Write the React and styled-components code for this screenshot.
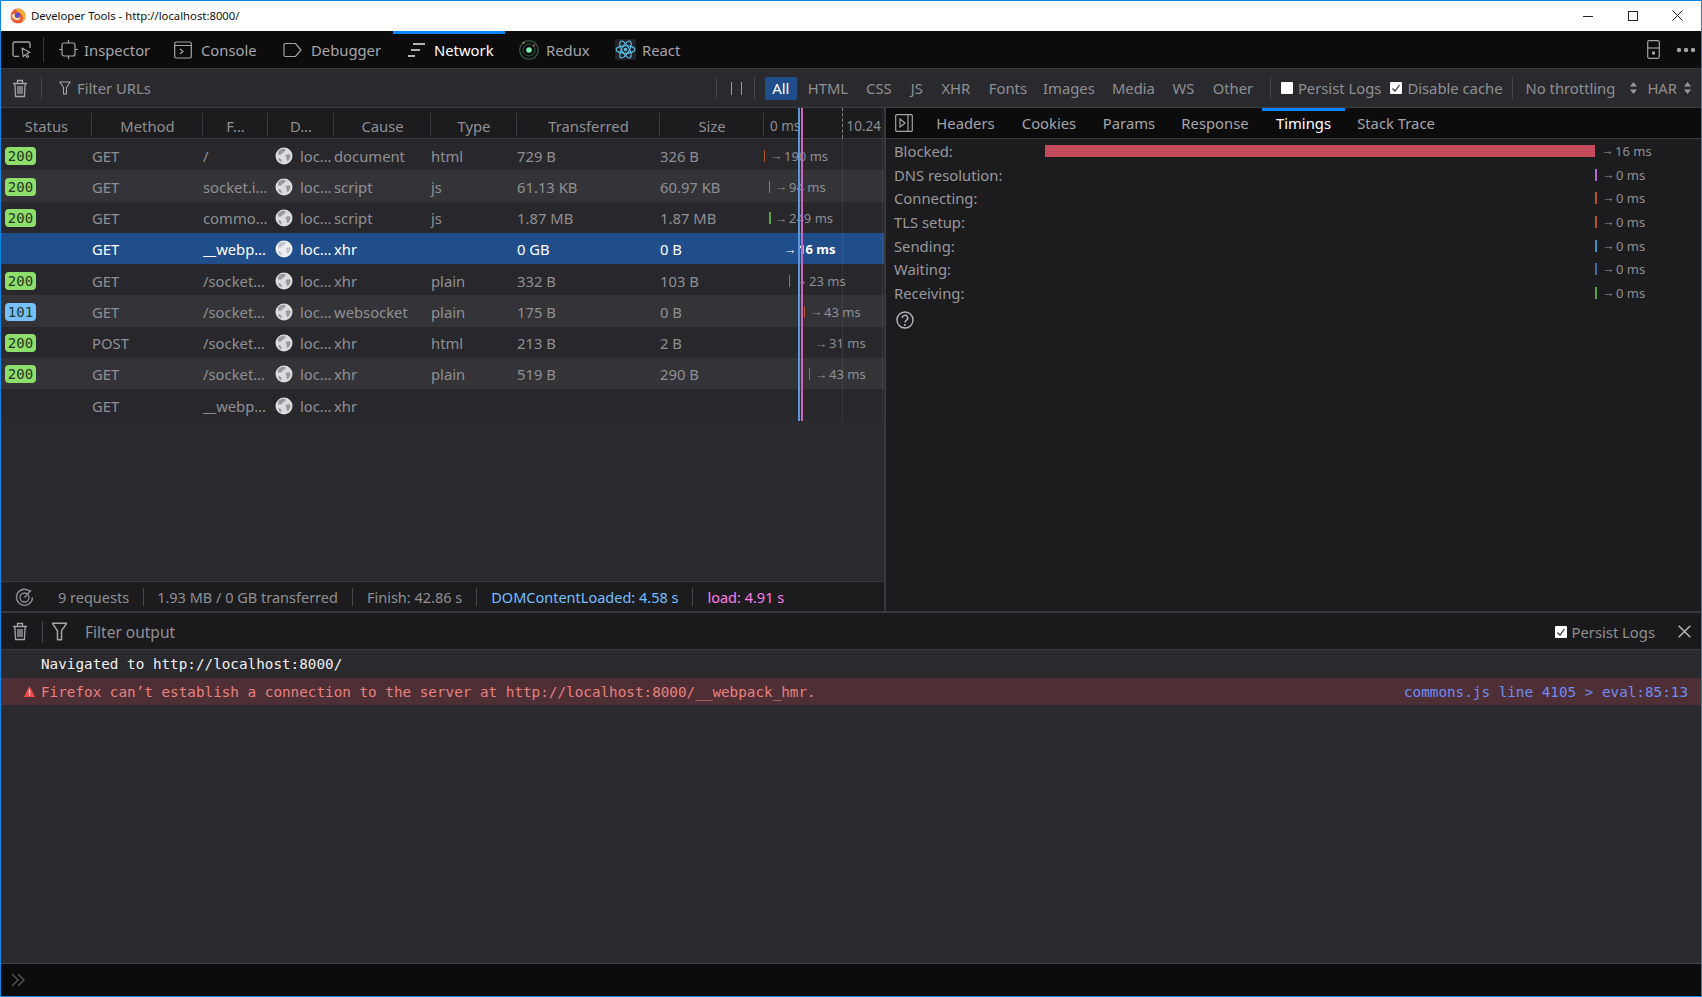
import React from "react";
import styled, { createGlobalStyle } from "styled-components";

const GlobalStyle = createGlobalStyle`
  * { box-sizing: border-box; }
  html, body { margin: 0; padding: 0; background: #2a2a2e; }
  body { font-family: "Noto Sans", "Open Sans", sans-serif; font-size: 14.5px; color: #8f8f93; }
`;

const MONO = `"DejaVu Sans Mono", "Liberation Mono", monospace`;

// data
const mainTabs = [
  { name: "Inspector", w: 115, icon: "inspector", gap: 6 },
  { name: "Console", w: 109, icon: "console" },
  { name: "Debugger", w: 125, icon: "debugger" },
  { name: "Network", w: 112, icon: "network", active: true },
  { name: "Redux", w: 95, icon: "redux", pad: 14, gap: 7 },
  { name: "React", w: 80, icon: "react", gap: 6 },
];

const filters = [
  { name: "HTML", w: 60 },
  { name: "CSS", w: 42 },
  { name: "JS", w: 34 },
  { name: "XHR", w: 44 },
  { name: "Fonts", w: 60 },
  { name: "Images", w: 62 },
  { name: "Media", w: 67 },
  { name: "WS", w: 33 },
  { name: "Other", w: 66 },
];

const columns = [
  { name: "Status", w: 91 },
  { name: "Method", w: 111 },
  { name: "F…", w: 65 },
  { name: "D…", w: 66 },
  { name: "Cause", w: 97 },
  { name: "Type", w: 86 },
  { name: "Transferred", w: 143 },
  { name: "Size", w: 104 },
];

const requests = [
  { status: "200", method: "GET", file: "/", cause: "document", type: "html", sent: "729 B", size: "326 B", at: 0, tick: "#b3552a", time: "190 ms" },
  { status: "200", method: "GET", file: "socket.i…", cause: "script", type: "js", sent: "61.13 KB", size: "60.97 KB", at: 5, tick: "#5f9e4a", time: "94 ms" },
  { status: "200", method: "GET", file: "commo…", cause: "script", type: "js", sent: "1.87 MB", size: "1.87 MB", at: 5, tick: "#5f9e4a", tickW: 2, time: "249 ms" },
  { method: "GET", file: "__webp…", cause: "xhr", sent: "0 GB", size: "0 B", at: 21, time: "16 ms", selected: true },
  { status: "200", method: "GET", file: "/socket…", cause: "xhr", type: "plain", sent: "332 B", size: "103 B", at: 25, tick: "#77777b", time: "23 ms" },
  { status: "101", method: "GET", file: "/socket…", cause: "websocket", type: "plain", sent: "175 B", size: "0 B", at: 40, tick: "#b3552a", time: "43 ms" },
  { status: "200", method: "POST", file: "/socket…", cause: "xhr", type: "html", sent: "213 B", size: "2 B", at: 52, time: "31 ms" },
  { status: "200", method: "GET", file: "/socket…", cause: "xhr", type: "plain", sent: "519 B", size: "290 B", at: 45, tick: "#77777b", time: "43 ms" },
  { method: "GET", file: "__webp…", cause: "xhr" },
];

const detailTabs = [
  { name: "Headers", w: 85 },
  { name: "Cookies", w: 82 },
  { name: "Params", w: 78 },
  { name: "Response", w: 94 },
  { name: "Timings", w: 83, active: true },
  { name: "Stack Trace", w: 102 },
];

const timings = [
  { name: "Blocked:", bar: 550, color: "#c24a5a", time: "16 ms" },
  { name: "DNS resolution:", color: "#b06ad0", time: "0 ms" },
  { name: "Connecting:", color: "#b3552a", time: "0 ms" },
  { name: "TLS setup:", color: "#b3552a", time: "0 ms" },
  { name: "Sending:", color: "#3f8fc4", time: "0 ms" },
  { name: "Waiting:", color: "#46699c", time: "0 ms" },
  { name: "Receiving:", color: "#5f9e4a", time: "0 ms" },
];

// window
const Window = styled.div`
  width: 1702px;
  height: 997px;
  border: 1px solid #0f86e6;
  display: flex;
  flex-direction: column;
  overflow: hidden;
  background: #2a2a2e;
`;

const TitleBar = styled.div`
  height: 30px;
  flex: none;
  background: #fff;
  display: flex;
  align-items: center;
  padding: 0 0 1px 9px;
  color: #111;
  font-size: 11.3px;
`;

const TitleText = styled.span`
  margin-left: 5px;
  flex: 1;
`;

const WinButton = styled.span`
  width: 45px;
  height: 30px;
  display: flex;
  align-items: center;
  justify-content: center;
  margin-right: ${(p) => p.$mr || 0}px;
`;

// devtools tabs
const TabBar = styled.div`
  height: 38px;
  flex: none;
  background: #0c0c0d;
  border-bottom: 1px solid #38383d;
  display: flex;
  align-items: stretch;
`;

const PickButton = styled.div`
  width: 43px;
  display: flex;
  align-items: center;
  padding-left: 11px;
  position: relative;
  &::after {
    content: "";
    position: absolute;
    right: 0;
    top: 6px;
    bottom: 6px;
    width: 1px;
    background: #38383d;
  }
`;

const MainTab = styled.div`
  width: ${(p) => p.$w}px;
  flex: none;
  display: flex;
  align-items: center;
  gap: ${(p) => p.$gap}px;
  padding-left: ${(p) => p.$pad}px;
  border-top: 3px solid ${(p) => (p.$active ? "#0a84ff" : "transparent")};
  padding-bottom: 3px;
  color: ${(p) => (p.$active ? "#fff" : "#a5a5a9")};
  font-size: 14.8px;
`;

const TabEnd = styled.div`
  margin-left: auto;
  display: flex;
  align-items: center;
  gap: 16px;
  padding-right: 5px;
`;

// network filter toolbar
const FilterBar = styled.div`
  height: 39px;
  flex: none;
  background: #2a2a2e;
  border-bottom: 1px solid #3d3d42;
  display: flex;
  align-items: center;
  padding: 0 10px 0 11px;
  font-size: 14.8px;
  color: #8f8f93;
`;

const Sep = styled.span`
  width: 1px;
  height: ${(p) => p.$h || 22}px;
  flex: none;
  background: #47474c;
  margin-left: ${(p) => p.$ml ?? 0}px;
`;

const FilterText = styled.span`
  flex: 1;
  display: flex;
  align-items: center;
  gap: 6px;
  margin-left: 17px;
`;

const PauseBars = styled.span`
  width: 11px;
  height: 13px;
  margin: 0 12px 0 14px;
  border-left: 1px solid #9a9a9e;
  border-right: 1px solid #9a9a9e;
`;

const TypeAll = styled.span`
  width: 32px;
  height: 23px;
  margin-left: 10px;
  margin-right: 1px;
  display: flex;
  align-items: center;
  justify-content: center;
  background: #204e8a;
  color: #fff;
  border-radius: 2px;
`;

const TypeButton = styled.span`
  width: ${(p) => p.$w}px;
  text-align: center;
`;

const Check = styled.span`
  width: 12px;
  height: 12px;
  flex: none;
  background: #fff;
  border-radius: 1px;
  display: flex;
  align-items: center;
  justify-content: center;
  margin-right: 5px;
`;

const CheckLabel = styled.span`
  display: flex;
  align-items: center;
  margin-left: ${(p) => p.$ml || 0}px;
  white-space: nowrap;
  font-size: 14.8px;
`;

const Select = styled.span`
  display: flex;
  align-items: center;
  gap: ${(p) => p.$gap}px;
  margin-left: ${(p) => p.$ml}px;
  white-space: nowrap;
  font-size: 14.8px;
`;

// split between list and side panel
const Split = styled.div`
  height: 503px;
  flex: none;
  display: flex;
`;

const ListPane = styled.div`
  width: 885px;
  flex: none;
  display: flex;
  flex-direction: column;
  border-right: 2px solid #38383d;
`;

const ListArea = styled.div`
  flex: 1;
  position: relative;
  overflow: hidden;
`;

const HeadRow = styled.div`
  height: 31px;
  background: #1c1c1f;
  border-bottom: 1px solid #3d3d42;
  display: flex;
  font-size: 14.8px;
  color: #8f8f93;
`;

const HeadCell = styled.div`
  width: ${(p) => p.$w}px;
  flex: none;
  display: flex;
  align-items: center;
  justify-content: center;
  padding-top: 5px;
  position: relative;
  &::after {
    content: "";
    position: absolute;
    right: 0;
    top: 5px;
    bottom: 2px;
    width: 1px;
    background: #38383d;
  }
`;

const WaterHead = styled.div`
  flex: 1;
  display: flex;
  justify-content: space-between;
  align-items: center;
  padding: 5px 3px 0 6px;
  font-size: 13.5px;
  white-space: nowrap;
`;

const Row = styled.div`
  height: 31.25px;
  padding-top: 2px;
  display: grid;
  grid-template-columns: 91px 111px 65px 30px 36px 97px 86px 143px 104px 1fr;
  align-items: center;
  background: ${(p) => (p.$selected ? "#204e8a" : p.$even ? "#343438" : "#28282c")};
  color: ${(p) => (p.$selected ? "#fff" : "#8f8f93")};
  font-size: 14.8px;
  white-space: nowrap;
`;

const Badge = styled.span`
  width: 31px;
  height: 18px;
  margin-left: 4px;
  display: flex;
  align-items: center;
  justify-content: center;
  border-radius: 4px;
  background: ${(p) => (p.$info ? "#75bfff" : "#8ede6c")};
  color: #24391e;
  font: 14px ${MONO};
`;

const GlobeCell = styled.span`
  display: flex;
  padding-left: 7px;
`;

const DomainText = styled.span`
  padding-left: 2px;
`;

const Timing = styled.span`
  display: flex;
  align-items: center;
  padding-left: ${(p) => p.$at}px;
  font-size: 13px;
  font-weight: ${(p) => (p.$selected ? 700 : 400)};
`;

const Arrow = styled.span`
  width: 14px;
  flex: none;
  font-size: 12.5px;
  font-weight: 400;
  margin-left: -1px;
`;

const Tick = styled.span`
  width: ${(p) => p.$w}px;
  height: 12px;
  flex: none;
  margin-right: ${(p) => 7 - p.$w}px;
  background: ${(p) => p.$color};
`;

const MarkerLine = styled.span`
  position: absolute;
  top: 0;
  height: 313px;
  left: ${(p) => p.$x}px;
  width: 1.6px;
  background: ${(p) => p.$color};
`;

const GridLine = styled(MarkerLine)`
  width: 1px;
  background: rgba(255, 255, 255, 0.07);
`;

const HeadDash = styled.span`
  position: absolute;
  top: 0;
  left: 841px;
  height: 30px;
  border-left: 1px dashed #77777b;
`;

const StatusBar = styled.div`
  height: 30px;
  flex: none;
  background: #1c1c1f;
  border-top: 1px solid #38383d;
  display: flex;
  align-items: center;
  padding: 1px 0 0 14px;
  font-size: 14.5px;
  color: #8f8f93;
  white-space: nowrap;
`;

const StatusItem = styled.span`
  color: ${(p) => p.$color || "#8f8f93"};
  margin-left: ${(p) => p.$ml}px;
  margin-right: 14px;
`;

// side panel
const SidePane = styled.div`
  flex: 1;
  background: #1c1c1f;
  display: flex;
  flex-direction: column;
`;

const DetailBar = styled.div`
  height: 31px;
  flex: none;
  background: #0c0c0d;
  border-bottom: 1px solid #38383d;
  display: flex;
`;

const ToggleBox = styled.div`
  width: 37px;
  display: flex;
  align-items: center;
  padding-left: 9px;
`;

const DetailTab = styled.div`
  width: ${(p) => p.$w}px;
  flex: none;
  display: flex;
  align-items: center;
  justify-content: center;
  border-top: 3px solid ${(p) => (p.$active ? "#0a84ff" : "transparent")};
  padding-bottom: 3px;
  color: ${(p) => (p.$active ? "#fff" : "#a5a5a9")};
  font-size: 14.8px;
`;

const TimingList = styled.div`
  padding-left: 8px;
`;

const TimingRow = styled.div`
  height: 23.7px;
  display: flex;
  align-items: center;
`;

const TimingName = styled.span`
  width: 151px;
  flex: none;
  font-size: 14.8px;
  color: #98989c;
`;

const TimingBar = styled.span`
  height: 12px;
  flex: none;
  width: ${(p) => p.$w || 2}px;
  margin-left: ${(p) => (p.$w ? 0 : 550)}px;
  margin-right: ${(p) => (p.$w ? 7 : 6)}px;
  background: ${(p) => p.$color};
`;

const TimingValue = styled.span`
  display: flex;
  font-size: 13px;
`;

const HelpIcon = styled.div`
  margin: 6px 0 0 2px;
`;

// console
const ConsolePane = styled.div`
  flex: 1;
  display: flex;
  flex-direction: column;
  border-top: 2px solid #38383d;
  background: #2a2a2e;
  min-height: 0;
`;

const ConsoleBar = styled.div`
  height: 37px;
  flex: none;
  background: #1a1a1c;
  border-bottom: 1px solid #38383d;
  display: flex;
  align-items: center;
  padding: 1px 0 0 11px;
  font-size: 15.5px;
  color: #8f8f93;
`;

const ConsoleFilter = styled.span`
  flex: 1;
  margin-left: 17px;
`;

const ConsoleFunnel = styled.span`
  display: flex;
  margin-left: 8px;
`;

const ConsoleClose = styled.span`
  display: flex;
  margin: 0 10px 0 23px;
`;

const Messages = styled.div`
  flex: 1;
  font: 14.3px ${MONO};
  white-space: pre;
`;

const Message = styled.div`
  height: ${(p) => (p.$error ? 27 : 28)}px;
  display: flex;
  align-items: center;
  padding: 0 13px 0 ${(p) => (p.$error ? 23 : 40)}px;
  background: ${(p) => (p.$error ? "#4e2f36" : "transparent")};
  color: ${(p) => (p.$error ? "#e9817f" : "#f0f0f2")};
`;

const MessageText = styled.span`
  flex: 1;
  margin-left: 6px;
`;

const SourceLink = styled.span`
  color: #6e8cf5;
`;

const InputBar = styled.div`
  height: 33px;
  flex: none;
  background: #0c0c0d;
  border-top: 1px solid #44444a;
  display: flex;
  align-items: center;
  padding: 0 0 0 8px;
`;

// icons
const Svg = ({ size = 16, h, children, vb }) => (
  <svg width={size} height={h || size} viewBox={vb || `0 0 ${size} ${h || size}`} fill="none" style={{ flex: "none", display: "block" }}>
    {children}
  </svg>
);

const Firefox = () => (
  <Svg size={16} vb="0 0 16 16">
    <circle cx="8" cy="8" r="7.500" fill="#ea5a35" />
    <path d="M6 .8C10 0 15 2.500 15.400 8 15.500 11 14 13.500 12 14.500 14 11 13 6 9.500 4.500 8 3.800 6.500 3 6 .8z" fill="#fbb232" />
    <path d="M1.500 7.500C2.500 6 4 5.500 5.500 5.800 4.800 6.800 4.500 7.800 5 8.500 6 10 9 9.800 10 8.500 11 11 9 12.500 6.800 12.300 4 12 2 10 1.500 7.500z" fill="#f9d9a8" />
    <circle cx="7.500" cy="7.300" r="2.700" fill="#5a4fc8" />
  </Svg>
);

const Trash = ({ color = "#a5a5a9" }) => (
  <Svg size={16} h={19} vb="0 0 16 19">
    <path d="M1 4.500h14M5.500 4V1.500h5V4M2.800 4.500l.8 13h8.800l.8-13" stroke={color} strokeWidth="1.300" />
    <path d="M6 7v8M8 7v8M10 7v8" stroke={color} strokeWidth="1.300" />
  </Svg>
);

const Funnel = ({ size = 12 }) => (
  <Svg size={size} h={size + 2} vb="0 0 12 14">
    <path d="M.8 1h10.400L7.500 6.500V13h-3V6.500z" stroke="#a5a5a9" strokeWidth="1.100" strokeLinejoin="round" />
  </Svg>
);

const Arrows = () => (
  <Svg size={7} h={12} vb="0 0 7 12">
    <path d="M3.500 0 7 4.500H0zM3.500 12 0 7.500h7z" fill="#9a9a9e" />
  </Svg>
);

const Globe = ({ selected }) => (
  <Svg size={18} vb="0 0 18 18">
    <circle cx="9" cy="9" r="8.500" fill={selected ? "#eeeeef" : "#dcdcde"} />
    <path d="M4 3.500C6 2 8 1.500 10 2c1 .8.500 1.800-.5 2.500S7.500 6 6.500 7 4.500 8 3.500 7.500 3 4.500 4 3.500zM11 8c1.500-1 4-.8 4.500.5.300 1.500-1 4-2.500 5.500-1 .5-1.500-1-1.500-2.500S10 9 11 8zM4 11c1 0 2 1 2.500 2s.5 2-.5 2-2.500-2-2.500-3 0-1 .5-1z" fill={selected ? "#c4c7ce" : "#9a9a9d"} />
  </Svg>
);

const MainTabIcon = ({ type }) => {
  const c = "#a5a5a9";
  switch (type) {
    case "inspector":
      return (
        <Svg size={19} vb="0 0 19 19">
          <rect x="3" y="3" width="13" height="13" rx="2" stroke={c} strokeWidth="1.200" />
          <path d="M9.500 0v3M9.500 16v3M0 9.500h3M16 9.500h3" stroke={c} strokeWidth="1.200" />
        </Svg>
      );
    case "console":
      return (
        <Svg size={18} vb="0 0 18 18">
          <rect x=".7" y="1" width="16.600" height="16" rx="1.500" stroke={c} strokeWidth="1.200" />
          <path d="M1 4.500h16M6 8l3 2.500L6 13" stroke={c} strokeWidth="1.200" />
        </Svg>
      );
    case "debugger":
      return (
        <Svg size={19} h={16} vb="0 0 19 16">
          <path d="M2.500 1.500h10L18 8l-5.500 6.500h-10A1.500 1.500 0 0 1 1 13V3a1.500 1.500 0 0 1 1.500-1.500z" stroke={c} strokeWidth="1.200" />
        </Svg>
      );
    case "network":
      return (
        <Svg size={17} h={14} vb="0 0 17 14">
          <path d="M5 1h12M3 7h9M0 13h7" stroke="#e8e8ea" strokeWidth="1.300" />
        </Svg>
      );
    case "redux":
      return (
        <Svg size={20} vb="0 0 20 20">
          <circle cx="10" cy="10" r="9.300" stroke="#2f5a45" strokeWidth="1.300" />
          <circle cx="10" cy="10" r="6" stroke="#2f5a45" strokeWidth="1" />
          <circle cx="10" cy="10" r="2.800" fill="#7fefb0" />
          <circle cx="15" cy="5.500" r="1" fill="#d0603a" />
          <circle cx="4.500" cy="2.800" r="1" fill="#d08a3a" />
        </Svg>
      );
    case "react":
      return (
        <Svg size={21} vb="0 0 21 21">
          <rect width="21" height="21" rx="2" fill="#222327" />
          <g stroke="#61c4f0" strokeWidth="1.100" fill="none">
            <ellipse cx="10.500" cy="10.500" rx="9.500" ry="3.700" />
            <ellipse cx="10.500" cy="10.500" rx="9.500" ry="3.700" transform="rotate(60 10.500 10.500)" />
            <ellipse cx="10.500" cy="10.500" rx="9.500" ry="3.700" transform="rotate(120 10.500 10.500)" />
          </g>
          <circle cx="10.500" cy="10.500" r="1.700" fill="#61c4f0" />
        </Svg>
      );
    default:
      return null;
  }
};

const CheckMark = () => (
  <Svg size={10} vb="0 0 10 10">
    <path d="M1.500 5.500 4 8l4.500-6" stroke="#333" strokeWidth="1.200" />
  </Svg>
);

const Waterfall = ({ r }) => {
  if (!r.time) return <span />;
  return (
    <Timing $at={r.at} $selected={r.selected}>
      {r.tick && <Tick $w={r.tickW || 1} $color={r.tick} />}
      <Arrow>→</Arrow>
      {r.time}
    </Timing>
  );
};

const App = () => {
  return (
    <>
      <GlobalStyle />
      <Window>
        <TitleBar>
          <Firefox />
          <TitleText>Developer Tools - http://localhost:8000/</TitleText>
          <WinButton>
            <Svg size={10} vb="0 0 10 10"><path d="M0 5.500h10" stroke="#222" /></Svg>
          </WinButton>
          <WinButton>
            <Svg size={10} vb="0 0 10 10"><rect x=".5" y=".5" width="9" height="9" stroke="#222" /></Svg>
          </WinButton>
          <WinButton $mr={1}>
            <Svg size={11} vb="0 0 11 11"><path d="M.5.500l10 10M10.500.5l-10 10" stroke="#222" /></Svg>
          </WinButton>
        </TitleBar>

        <TabBar>
          <PickButton>
            <Svg size={20} h={17} vb="0 0 20 17">
              <path d="M7 15.300H2.500A1.500 1.500 0 0 1 1 13.800V2.500A1.500 1.500 0 0 1 2.500 1h14A1.500 1.500 0 0 1 18 2.500V7" stroke="#a5a5a9" strokeWidth="1.300" />
              <path d="M10 7l8 4.500-3.300 1 2 3-1.500 1-2-3-2 2.300z" stroke="#a5a5a9" strokeWidth="1.100" strokeLinejoin="round" />
            </Svg>
          </PickButton>
          {mainTabs.map((tab) => (
            <MainTab key={tab.name} $w={tab.w} $active={tab.active} $pad={tab.pad || 15} $gap={tab.gap || 9}>
              <MainTabIcon type={tab.icon} />
              {tab.name}
            </MainTab>
          ))}
          <TabEnd>
            <Svg size={13} h={19} vb="0 0 13 19">
              <rect x=".7" y=".7" width="11.600" height="17.600" rx="1.500" stroke="#a5a5a9" strokeWidth="1.200" />
              <path d="M1 8h11" stroke="#a5a5a9" strokeWidth="1.200" />
              <rect x="5" y="11.500" width="3" height="3" fill="#a5a5a9" />
            </Svg>
            <Svg size={20} h={6} vb="0 0 20 6">
              <circle cx="3" cy="3" r="2.200" fill="#a5a5a9" />
              <circle cx="10" cy="3" r="2.200" fill="#a5a5a9" />
              <circle cx="17" cy="3" r="2.200" fill="#a5a5a9" />
            </Svg>
          </TabEnd>
        </TabBar>

        <FilterBar>
          <Trash />
          <Sep $ml={13} />
          <FilterText>
            <Funnel />
            Filter URLs
          </FilterText>
          <Sep />
          <PauseBars />
          <Sep />
          <TypeAll>All</TypeAll>
          {filters.map((f) => (
            <TypeButton key={f.name} $w={f.w}>{f.name}</TypeButton>
          ))}
          <Sep $ml={4} />
          <CheckLabel $ml={10}>
            <Check />
            Persist Logs
          </CheckLabel>
          <CheckLabel $ml={9}>
            <Check><CheckMark /></Check>
            Disable cache
          </CheckLabel>
          <Sep $ml={9} />
          <Select $gap={15} $ml={13}>No throttling <Arrows /></Select>
          <Select $gap={7} $ml={10}>HAR <Arrows /></Select>
        </FilterBar>

        <Split>
          <ListPane>
            <ListArea>
              <HeadRow>
                {columns.map((c) => (
                  <HeadCell key={c.name} $w={c.w}>{c.name}</HeadCell>
                ))}
                <WaterHead>
                  <span>0 ms</span>
                  <span>10.24</span>
                </WaterHead>
              </HeadRow>
              {requests.map((r, i) => (
                <Row key={i} $even={i % 2 === 1} $selected={r.selected}>
                  {r.status ? <Badge $info={r.status === "101"}>{r.status}</Badge> : <span />}
                  <span>{r.method}</span>
                  <span>{r.file}</span>
                  <GlobeCell><Globe selected={r.selected} /></GlobeCell>
                  <DomainText>loc…</DomainText>
                  <span>{r.cause}</span>
                  <span>{r.type}</span>
                  <span>{r.sent}</span>
                  <span>{r.size}</span>
                  <Waterfall r={r} />
                </Row>
              ))}
              <HeadDash />
              <GridLine $x={841} />
              <GridLine $x={881} />
              <MarkerLine $x={797} $color="#5b97d8" />
              <MarkerLine $x={800} $color="#c468c0" />
            </ListArea>
            <StatusBar>
              <Svg size={19} vb="0 0 19 19">
                <path d="M15.500 4A8 8 0 1 0 17.500 9.500" stroke="#8f8f93" strokeWidth="1.400" />
                <circle cx="9.500" cy="9.500" r="4.500" stroke="#8f8f93" strokeWidth="1.300" />
                <path d="M9.500 9.500 16 2" stroke="#8f8f93" strokeWidth="1.300" />
              </Svg>
              <StatusItem $ml={24}>9 requests</StatusItem>
              <Sep $h={18} />
              <StatusItem $ml={13}>1.93 MB / 0 GB transferred</StatusItem>
              <Sep $h={18} />
              <StatusItem $ml={14}>Finish: 42.86 s</StatusItem>
              <Sep $h={18} />
              <StatusItem $ml={14} $color="#75bfff">DOMContentLoaded: 4.58 s</StatusItem>
              <Sep $h={18} />
              <StatusItem $ml={14} $color="#ff7de9">load: 4.91 s</StatusItem>
            </StatusBar>
          </ListPane>

          <SidePane>
            <DetailBar>
              <ToggleBox>
                <Svg size={18} vb="0 0 18 18">
                  <rect x=".7" y=".7" width="16.600" height="16.600" rx="1" stroke="#a5a5a9" strokeWidth="1.200" />
                  <path d="M13 1v16M5 5l5 4-5 4z" stroke="#a5a5a9" strokeWidth="1.200" />
                </Svg>
              </ToggleBox>
              {detailTabs.map((t) => (
                <DetailTab key={t.name} $w={t.w} $active={t.active}>{t.name}</DetailTab>
              ))}
            </DetailBar>
            <TimingList>
              {timings.map((t) => (
                <TimingRow key={t.name}>
                  <TimingName>{t.name}</TimingName>
                  <TimingBar $w={t.bar} $color={t.color} />
                  <TimingValue><Arrow>→</Arrow>{t.time}</TimingValue>
                </TimingRow>
              ))}
              <HelpIcon>
                <Svg size={18} vb="0 0 18 18">
                  <circle cx="9" cy="9" r="8" stroke="#b5b5b9" strokeWidth="1.400" />
                  <path d="M6.300 7a2.700 2.700 0 1 1 4 2.400C9.300 10 9 10.500 9 11.500" stroke="#b5b5b9" strokeWidth="1.500" />
                  <circle cx="9" cy="14" r="1" fill="#b5b5b9" />
                </Svg>
              </HelpIcon>
            </TimingList>
          </SidePane>
        </Split>

        <ConsolePane>
          <ConsoleBar>
            <Trash />
            <Sep $ml={14} />
            <ConsoleFunnel><Funnel size={17} /></ConsoleFunnel>
            <ConsoleFilter>Filter output</ConsoleFilter>
            <CheckLabel>
              <Check><CheckMark /></Check>
              Persist Logs
            </CheckLabel>
            <ConsoleClose>
              <Svg size={13} vb="0 0 13 13">
                <path d="M.7.700l11.600 11.600M12.300.7.700 12.300" stroke="#b5b5b9" strokeWidth="1.500" />
              </Svg>
            </ConsoleClose>
          </ConsoleBar>
          <Messages>
            <Message>Navigated to http://localhost:8000/</Message>
            <Message $error>
              <Svg size={11} h={11} vb="0 0 11 11">
                <path d="M5.500 0 11 11H0z" fill="#f04a4a" />
                <path d="M5.500 3.500v4M5.500 8.500v1.200" stroke="#fff" strokeWidth="1.200" />
              </Svg>
              <MessageText>Firefox can’t establish a connection to the server at http://localhost:8000/__webpack_hmr.</MessageText>
              <SourceLink>commons.js line 4105 &gt; eval:85:13</SourceLink>
            </Message>
          </Messages>
          <InputBar>
            <Svg size={18} h={14} vb="0 0 18 14">
              <path d="M1 1l6 6-6 6M7 1l6 6-6 6" stroke="#55555a" strokeWidth="1.400" transform="translate(2 0)" />
            </Svg>
          </InputBar>
        </ConsolePane>
      </Window>
    </>
  );
};

export default App;
